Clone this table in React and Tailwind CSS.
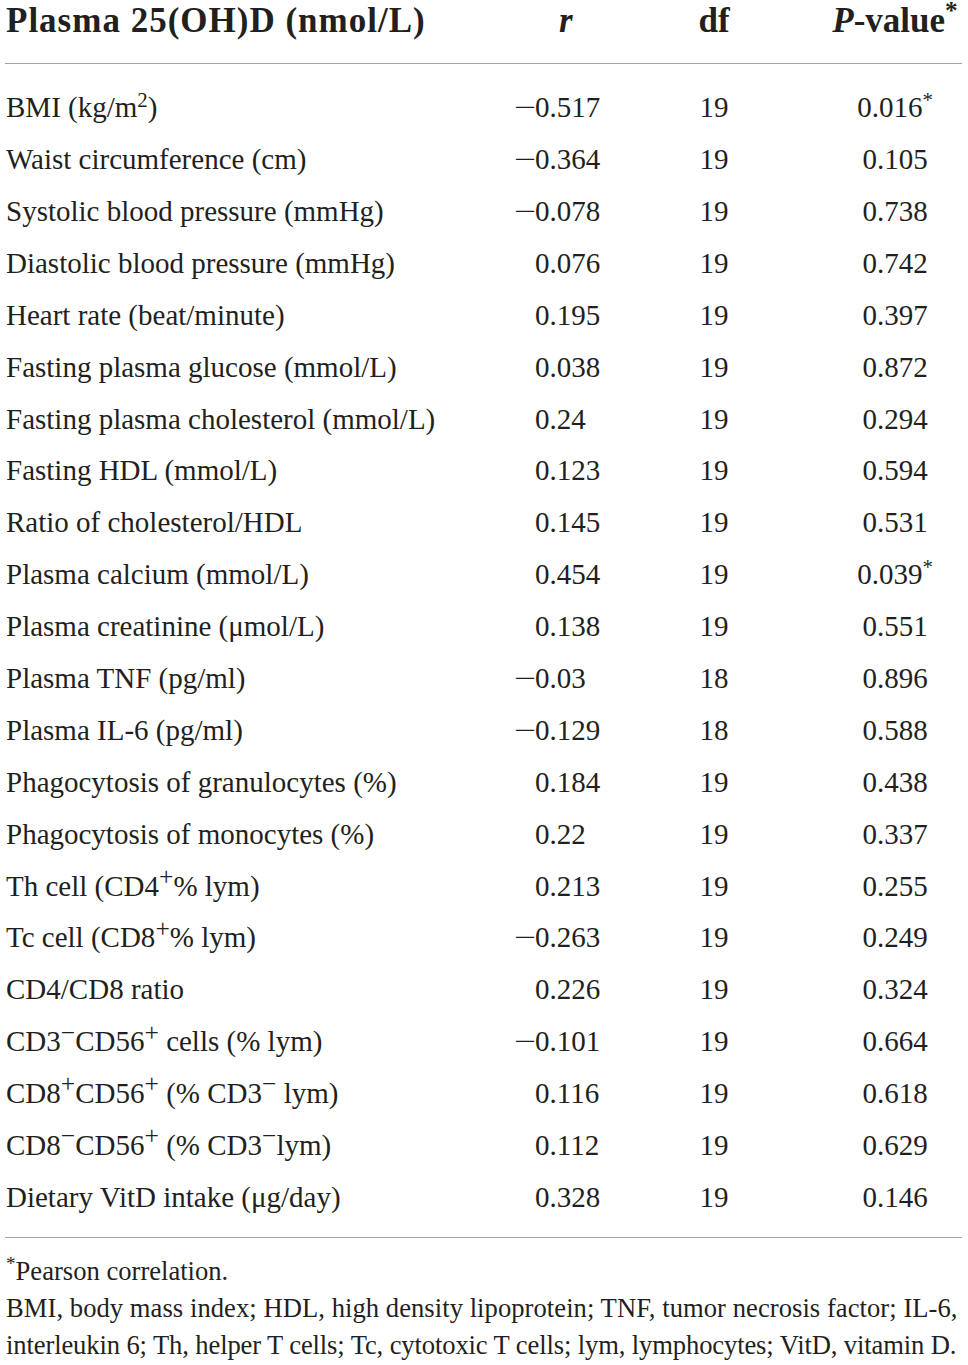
import React from "react";

const Sup = ({ children }) => (
  <span className="relative top-[-0.5em] text-[0.72em] leading-none">{children}</span>
);

const SupS = ({ children }) => (
  <span className="relative top-[-0.42em] text-[0.88em] leading-none">{children}</span>
);

const rows = [
  [<>BMI (kg/m<Sup>2</Sup>)</>, "−0.517", "19", "0.016", true],
  ["Waist circumference (cm)", "−0.364", "19", "0.105"],
  ["Systolic blood pressure (mmHg)", "−0.078", "19", "0.738"],
  ["Diastolic blood pressure (mmHg)", "0.076", "19", "0.742"],
  ["Heart rate (beat/minute)", "0.195", "19", "0.397"],
  ["Fasting plasma glucose (mmol/L)", "0.038", "19", "0.872"],
  ["Fasting plasma cholesterol (mmol/L)", "0.24", "19", "0.294"],
  ["Fasting HDL (mmol/L)", "0.123", "19", "0.594"],
  ["Ratio of cholesterol/HDL", "0.145", "19", "0.531"],
  ["Plasma calcium (mmol/L)", "0.454", "19", "0.039", true],
  ["Plasma creatinine (μmol/L)", "0.138", "19", "0.551"],
  ["Plasma TNF (pg/ml)", "−0.03", "18", "0.896"],
  ["Plasma IL-6 (pg/ml)", "−0.129", "18", "0.588"],
  ["Phagocytosis of granulocytes (%)", "0.184", "19", "0.438"],
  ["Phagocytosis of monocytes (%)", "0.22", "19", "0.337"],
  [<>Th cell (CD4<SupS>+</SupS>% lym)</>, "0.213", "19", "0.255"],
  [<>Tc cell (CD8<SupS>+</SupS>% lym)</>, "−0.263", "19", "0.249"],
  ["CD4/CD8 ratio", "0.226", "19", "0.324"],
  [<>CD3<SupS>−</SupS>CD56<SupS>+</SupS> cells (% lym)</>, "−0.101", "19", "0.664"],
  [<>CD8<SupS>+</SupS>CD56<SupS>+</SupS> (% CD3<SupS>−</SupS> lym)</>, "0.116", "19", "0.618"],
  [<>CD8<SupS>−</SupS>CD56<SupS>+</SupS> (% CD3<SupS>−</SupS>lym)</>, "0.112", "19", "0.629"],
  ["Dietary VitD intake (μg/day)", "0.328", "19", "0.146"],
];

function RVal({ v }) {
  const neg = v.startsWith("−");
  return (
    <div className="whitespace-nowrap">
      <span className="inline-block w-[21px] scale-x-[1.35] origin-left">{neg ? "−" : ""}</span>
      {neg ? v.slice(1) : v}
    </div>
  );
}

export default function App() {
  return (
    <div className="w-[968px] bg-white text-[#231f20] font-['Liberation_Serif',serif] pl-[5px] pr-[6px]">
      <div className="grid grid-cols-[509px_130px_140px_1fr] h-[64px] border-b border-[#a3a3a3] text-[35px] leading-[40px] pt-[1px] font-bold">
        <div className="pl-[1px] tracking-[1px] whitespace-nowrap">Plasma 25(OH)D (nmol/L)</div>
        <div className="pl-[45px] italic">r</div>
        <div className="text-center">df</div>
        <div className="pl-[44px] text-center whitespace-nowrap">
          <span className="italic">P</span>-value<Sup>*</Sup>
        </div>
      </div>
      <div className="pt-[18px] pb-[13px] border-b border-[#a3a3a3] text-[29px]">
        {rows.map((r, i) => (
          <div key={i} className="grid grid-cols-[509px_130px_140px_1fr] h-[51.9px] items-center">
            <div className="pl-[1px] whitespace-nowrap">{r[0]}</div>
            <RVal v={r[1]} />
            <div className="text-center">{r[2]}</div>
            <div className="pl-[44px] text-center whitespace-nowrap">
              {r[3]}
              {r[4] ? <Sup>*</Sup> : null}
            </div>
          </div>
        ))}
      </div>
      <div className="pt-[15px] pl-[1px] text-[26.6px] leading-[37px] whitespace-nowrap">
        <div><Sup>*</Sup>Pearson correlation.</div>
        <div className="tracking-[0.05px]">BMI, body mass index; HDL, high density lipoprotein; TNF, tumor necrosis factor; IL-6,</div>
        <div className="tracking-[-0.12px]">interleukin 6; Th, helper T cells; Tc, cytotoxic T cells; lym, lymphocytes; VitD, vitamin D.</div>
      </div>
    </div>
  );
}
